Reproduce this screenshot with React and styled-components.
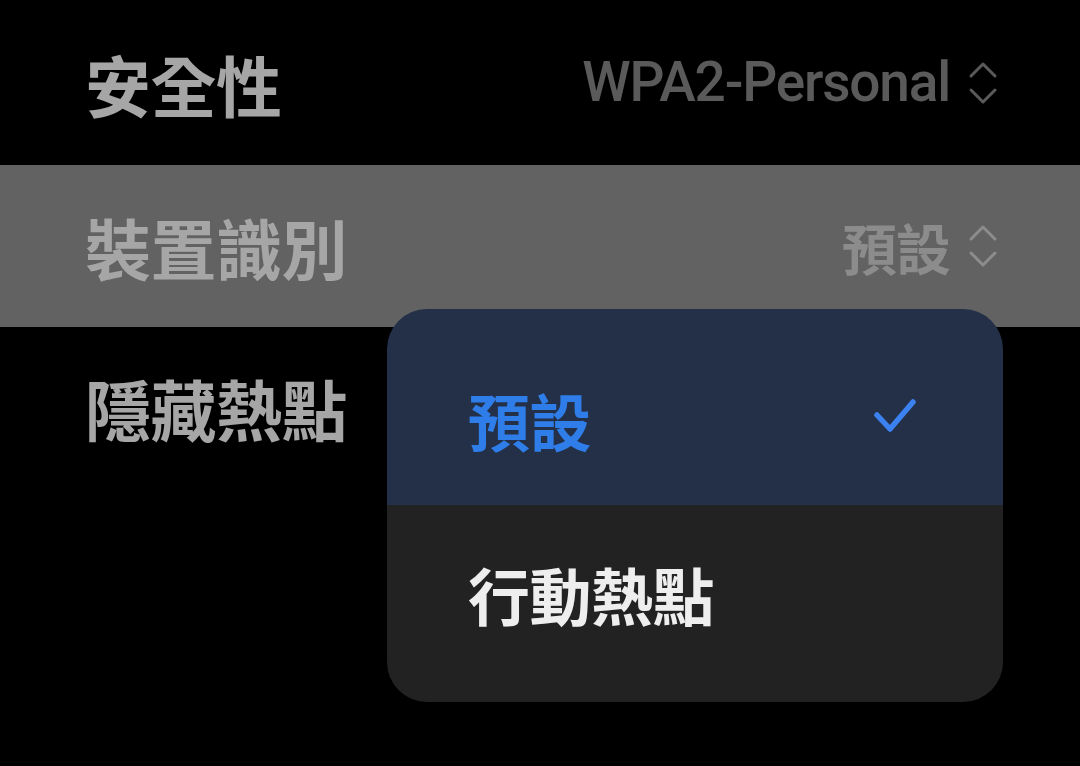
import React from 'react'
import styled, { createGlobalStyle } from 'styled-components'

const GlobalStyle = createGlobalStyle`
    html, body {
        margin:0;
        padding:0;
        background:#000;
    }
    body {
        font-family:Roboto, "Noto Sans CJK TC", sans-serif;
    }
`

const Screen = styled.div`
    position:relative;
    width:1080px;
    height:766px;
    background:#000;
    overflow:hidden;
`

const Row = styled.div`
    display:flex;
    align-items:center;
    justify-content:space-between;
    height:${p => p.height}px;
    padding:0 82px 0 85px;
    box-sizing:border-box;
    background:${p => (p.active ? '#626262' : '#000')};
`

const Label = styled.div`
    font-family:"Noto Sans CJK TC", sans-serif;
    font-size:66px;
    font-weight:700;
    color:#a6a6a6;
    line-height:1;
    letter-spacing:-0.5px;
`

const ValueBox = styled.div`
    display:flex;
    align-items:center;
    gap:18px;
    color:${p => p.color};
`

const Value = styled.span`
    font-family:${p => (p.cjk ? '"Noto Sans CJK TC"' : 'Roboto, "Noto Sans CJK TC"')}, sans-serif;
    font-size:55px;
    font-weight:${p => (p.cjk ? 700 : 500)};
    line-height:1;
    letter-spacing:${p => (p.cjk ? -1 : -1.2)}px;
`

const Menu = styled.div`
    position:absolute;
    left:387px;
    top:309px;
    width:616px;
    height:393px;
    border-radius:40px;
    overflow:hidden;
    display:flex;
    flex-direction:column;
`

const MenuItem = styled.div`
    height:${p => (p.selected ? 196 : 197)}px;
    box-sizing:border-box;
    display:flex;
    align-items:center;
    justify-content:space-between;
    padding:${p => (p.selected ? '26px 86px 0 81px' : '0 86px 19px 81px')};
    background:${p => (p.selected ? '#233047' : '#222222')};
    color:${p => (p.selected ? '#2f7de9' : '#eeeeee')};
    font-family:"Noto Sans CJK TC", sans-serif;
    font-size:62px;
    font-weight:700;
    line-height:1;
    letter-spacing:-0.5px;
`

const CheckWrap = styled.span`
    display:flex;
    margin-top:-8px;
`

const Chevrons = ({ color }) => (
    <svg width="30" height="44" viewBox="0 0 30 44" fill="none" stroke={color} strokeWidth="3" strokeLinecap="round" strokeLinejoin="round">
        <path d="M3 15 L15 3 L27 15" />
        <path d="M3 29 L15 41 L27 29" />
    </svg>
)

const Check = () => (
    <svg width="44" height="36" viewBox="0 0 44 36" fill="none" stroke="#3b82f0" strokeWidth="5.5" strokeLinecap="round" strokeLinejoin="round">
        <path d="M4 17 L17 31 L40 4" />
    </svg>
)

const rows = [
    { label: '安全性', value: 'WPA2-Personal', color: '#5a5a5a', height: 165 },
    { label: '裝置識別', value: '預設', color: '#8c8c8c', cjk: true, active: true, height: 162 },
    { label: '隱藏熱點', height: 160 },
]

export default function App() {
    return <Screen>
        <GlobalStyle />
        {rows.map(r => (
            <Row key={r.label} active={r.active} height={r.height}>
                <Label>{r.label}</Label>
                {r.value && <ValueBox color={r.color}>
                    <Value cjk={r.cjk}>{r.value}</Value>
                    <Chevrons color={r.color} />
                </ValueBox>}
            </Row>
        ))}
        <Menu>
            <MenuItem selected>
                <span>預設</span>
                <CheckWrap><Check /></CheckWrap>
            </MenuItem>
            <MenuItem>
                <span>行動熱點</span>
            </MenuItem>
        </Menu>
    </Screen>
}
